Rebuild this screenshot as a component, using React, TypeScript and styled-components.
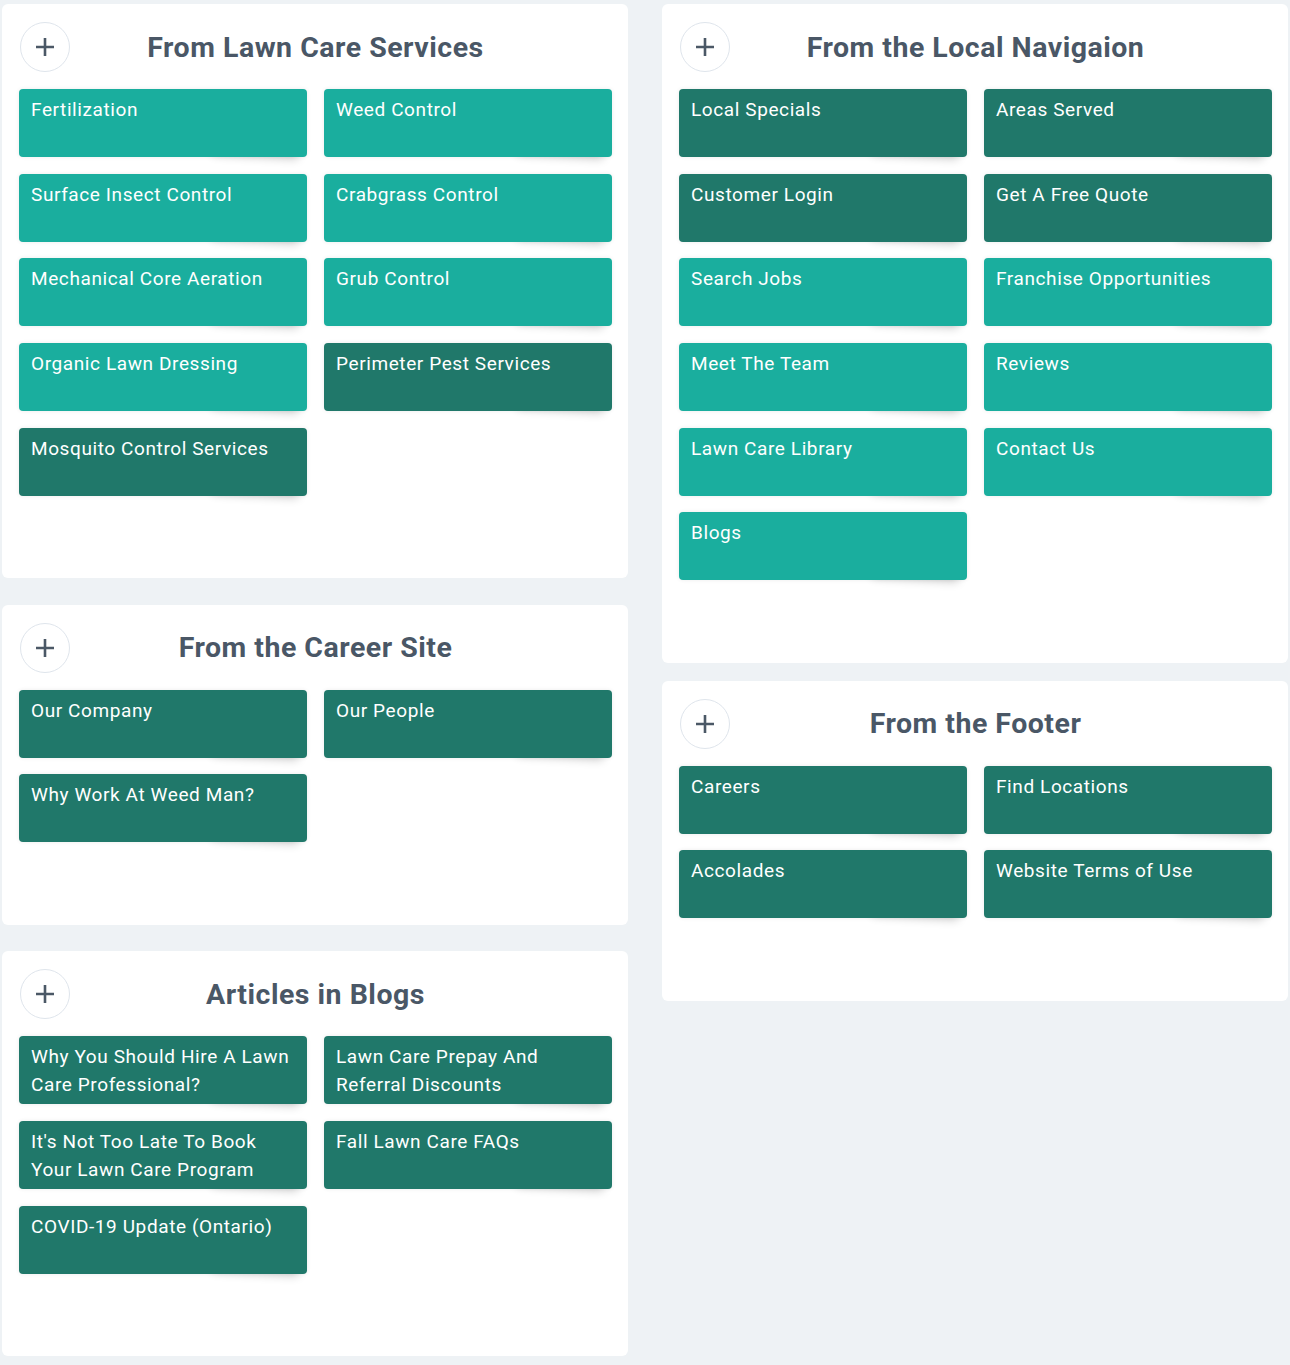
import React from 'react';
import styled, { createGlobalStyle } from 'styled-components';

const GlobalStyle = createGlobalStyle`
    body {
        margin: 0;
        background: #eef2f5;
        font-family: Roboto, "Noto Sans", sans-serif;
    }
`;

const Page = styled.div`
    display: grid;
    grid-template-columns: 626px 626px;
    column-gap: 34px;
    align-items: start;
    padding: 4px 2px 8px;
`;

const Column = styled.div<{ $gap: number }>`
    display: flex;
    flex-direction: column;
    gap: ${props => props.$gap}px;
`;

const Card = styled.section`
    position: relative;
    z-index: 0;
    background: #ffffff;
    border-radius: 6px;
    padding: 18px 16px 82.5px 17px;
`;

const Header = styled.div`
    display: grid;
    grid-template-columns: 50px 1fr 50px;
    align-items: center;
    margin-bottom: 17px;
`;

const AddButton = styled.button`
    width: 50px;
    height: 50px;
    margin-left: 1px;
    border-radius: 50%;
    border: 1.5px solid #dfe5ec;
    background: #ffffff;
    display: flex;
    align-items: center;
    justify-content: center;
    padding: 0;
`;

const Title = styled.h2`
    margin: 0;
    text-align: center;
    font-size: 28.5px;
    font-weight: 700;
    color: #4a5766;
    letter-spacing: 0.5px;
`;

const Tiles = styled.div`
    display: grid;
    grid-template-columns: 288px 288px;
    column-gap: 17px;
    row-gap: 16.67px;
`;

const Tile = styled.a<{ $dark?: boolean }>`
    position: relative;
    display: block;
    height: 68px;
    box-sizing: border-box;
    padding: 7px 12px 5px;
    border-radius: 4px;
    background: ${props => (props.$dark ? '#20786a' : '#1aae9e')};
    color: #ffffff;
    font-size: 19px;
    line-height: 28px;
    letter-spacing: 0.6px;
    text-decoration: none;
    box-shadow: 0 0 4px rgba(0, 0, 0, 0.08);

    &::after {
        content: '';
        position: absolute;
        z-index: -1;
        right: 8px;
        bottom: 10px;
        width: 30%;
        height: 20px;
        box-shadow: 0 10px 10px rgba(0, 0, 0, 0.2);
        transform: rotate(3deg);
    }
`;

const PlusIcon = () => (
    <svg width="22" height="22" viewBox="0 0 22 22">
        <path d="M11 2v18M2 11h18" stroke="#4b5866" strokeWidth="2.6" />
    </svg>
);

interface Link {
    label: string;
    dark?: boolean;
}

interface Section {
    title: string;
    links: Link[];
}

const lawn: Section = {
    title: 'From Lawn Care Services',
    links: [
        { label: 'Fertilization' },
        { label: 'Weed Control' },
        { label: 'Surface Insect Control' },
        { label: 'Crabgrass Control' },
        { label: 'Mechanical Core Aeration' },
        { label: 'Grub Control' },
        { label: 'Organic Lawn Dressing' },
        { label: 'Perimeter Pest Services', dark: true },
        { label: 'Mosquito Control Services', dark: true },
    ],
};

const career: Section = {
    title: 'From the Career Site',
    links: [
        { label: 'Our Company', dark: true },
        { label: 'Our People', dark: true },
        { label: 'Why Work At Weed Man?', dark: true },
    ],
};

const blogs: Section = {
    title: 'Articles in Blogs',
    links: [
        { label: 'Why You Should Hire A Lawn Care Professional?', dark: true },
        { label: 'Lawn Care Prepay And Referral Discounts', dark: true },
        { label: "It's Not Too Late To Book Your Lawn Care Program", dark: true },
        { label: 'Fall Lawn Care FAQs', dark: true },
        { label: 'COVID-19 Update (Ontario)', dark: true },
    ],
};

const local: Section = {
    title: 'From the Local Navigaion',
    links: [
        { label: 'Local Specials', dark: true },
        { label: 'Areas Served', dark: true },
        { label: 'Customer Login', dark: true },
        { label: 'Get A Free Quote', dark: true },
        { label: 'Search Jobs' },
        { label: 'Franchise Opportunities' },
        { label: 'Meet The Team' },
        { label: 'Reviews' },
        { label: 'Lawn Care Library' },
        { label: 'Contact Us' },
        { label: 'Blogs' },
    ],
};

const footer: Section = {
    title: 'From the Footer',
    links: [
        { label: 'Careers', dark: true },
        { label: 'Find Locations', dark: true },
        { label: 'Accolades', dark: true },
        { label: 'Website Terms of Use', dark: true },
    ],
};

const LinkCard: React.FunctionComponent<{ section: Section }> = ({ section }) => (
    <Card>
        <Header>
            <AddButton aria-label="Add">
                <PlusIcon />
            </AddButton>
            <Title>{section.title}</Title>
        </Header>
        <Tiles>
            {section.links.map(link => (
                <Tile key={link.label} $dark={link.dark}>
                    {link.label}
                </Tile>
            ))}
        </Tiles>
    </Card>
);

const App = () => (
    <>
        <GlobalStyle />
        <Page>
            <Column $gap={26.5}>
                <LinkCard section={lawn} />
                <LinkCard section={career} />
                <LinkCard section={blogs} />
            </Column>
            <Column $gap={18}>
                <LinkCard section={local} />
                <LinkCard section={footer} />
            </Column>
        </Page>
    </>
);

export default App;
